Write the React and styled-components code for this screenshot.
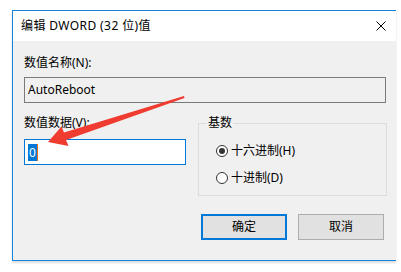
import React from "react";
import styled, { createGlobalStyle } from "styled-components";

const Global = createGlobalStyle`
  html, body { margin: 0; padding: 0; background: #ffffff; }
  body { font-family: "Noto Sans", "Noto Sans CJK SC", sans-serif; font-size: 12px; color: #000; }
  * { box-sizing: border-box; }
`;

const Page = styled.div`
  position: relative;
  width: 401px;
  height: 272px;
  padding: 10px 0 0 12px;
  overflow: hidden;
`;

const Window = styled.div`
  width: 384px;
  border-top: 1px solid #1883d7;
  border-left: 1px solid #1883d7;
  border-bottom: 1px solid #1883d7;
  box-shadow: 0 2px 2px rgba(0, 0, 0, 0.14);
  display: flex;
  flex-direction: column;
`;

const TitleBar = styled.div`
  height: 30px;
  background: #ffffff;
  display: flex;
  align-items: center;
  justify-content: space-between;
  padding: 0 10px 0 8px;
`;

const Title = styled.span`
  font-size: 12px;
  line-height: 16px;
  letter-spacing: 0.4px;
  color: #000;
`;

const Body = styled.div`
  background: #f0f0f0;
  padding: 14px 10px 20px 11px;
  display: flex;
  flex-direction: column;
`;

const Label = styled.div`
  height: 16px;
  line-height: 16px;
  font-size: 12px;
  color: #000;
  white-space: nowrap;
`;

const TextBox = styled.div`
  height: 26px;
  margin-top: ${(p) => p.$mt || 0}px;
  border: 1px solid ${(p) => (p.$focused ? "#0078d7" : "#7a7a7a")};
  background: ${(p) => (p.$focused ? "#ffffff" : "#f0f0f0")};
  display: flex;
  align-items: center;
  padding-left: 3px;
  font-size: 12px;
  line-height: 16px;
`;

const Selected = styled.span`
  display: inline-block;
  height: 17px;
  line-height: 17px;
  padding: 0 1px;
  background: #0078d7;
  color: #ffffff;
  border-right: 1px solid #e8701a;
`;

const MiddleRow = styled.div`
  margin-top: 12px;
  display: grid;
  grid-template-columns: 162px 189px;
  column-gap: 12px;
  align-items: start;
`;

const LeftCol = styled.div`
  display: flex;
  flex-direction: column;
`;

const Group = styled.fieldset`
  margin: 0;
  padding: 12px 0 9px 0;
  border: 1px solid #dcdcdc;
  min-width: 0;
  display: flex;
  flex-direction: column;
  gap: 11px;
`;

const Legend = styled.legend`
  margin-left: 8px;
  padding: 0 1px;
  font-size: 12px;
  line-height: 16px;
`;

const RadioRow = styled.label`
  display: flex;
  align-items: center;
  height: 16px;
  margin-left: 17px;
  gap: 3px;
  font-size: 12px;
  line-height: 16px;
`;

const RadioCircle = styled.span`
  width: 12px;
  height: 12px;
  border-radius: 50%;
  border: 1px solid #333333;
  background: #ffffff;
  display: flex;
  align-items: center;
  justify-content: center;
  &::after {
    content: "";
    width: 6px;
    height: 6px;
    border-radius: 50%;
    background: ${(p) => (p.$checked ? "#333333" : "transparent")};
  }
`;

const ButtonRow = styled.div`
  margin-top: 18px;
  padding-right: 2px;
  display: flex;
  justify-content: flex-end;
  gap: 11px;
`;

const Button = styled.div`
  width: 86px;
  height: 26px;
  background: #e1e1e1;
  border: ${(p) => (p.$default ? "2px solid #0078d7" : "1px solid #adadad")};
  display: flex;
  align-items: center;
  justify-content: center;
  font-size: 12px;
  line-height: 16px;
`;

const Arrow = styled.svg`
  position: absolute;
  left: 0;
  top: 0;
  pointer-events: none;
`;

export default function App() {
  return (
    <>
      <Global />
      <Page>
        <Window>
          <TitleBar>
            <Title>编辑 DWORD (32 位)值</Title>
            <svg width="10" height="10" viewBox="0 0 10 10">
              <path d="M0.5 0.5 L9.5 9.5 M9.5 0.5 L0.5 9.5" stroke="#000" strokeWidth="1" fill="none" />
            </svg>
          </TitleBar>
          <Body>
            <Label>数值名称(N):</Label>
            <TextBox $mt={6}>AutoReboot</TextBox>
            <MiddleRow>
              <LeftCol>
                <Label>数值数据(V):</Label>
                <TextBox $mt={8} $focused>
                  <Selected>0</Selected>
                </TextBox>
              </LeftCol>
              <Group>
                <Legend>基数</Legend>
                <RadioRow>
                  <RadioCircle $checked />
                  十六进制(H)
                </RadioRow>
                <RadioRow>
                  <RadioCircle />
                  十进制(D)
                </RadioRow>
              </Group>
            </MiddleRow>
            <ButtonRow>
              <Button $default>确定</Button>
              <Button>取消</Button>
            </ButtonRow>
          </Body>
        </Window>
        <Arrow width="401" height="272" viewBox="0 0 401 272">
          <polygon
            points="184,96 64,132.5 61.5,126.5 48,142 68.5,146 66,140 184.5,98"
            fill="#ef3b30"
          />
        </Arrow>
      </Page>
    </>
  );
}
